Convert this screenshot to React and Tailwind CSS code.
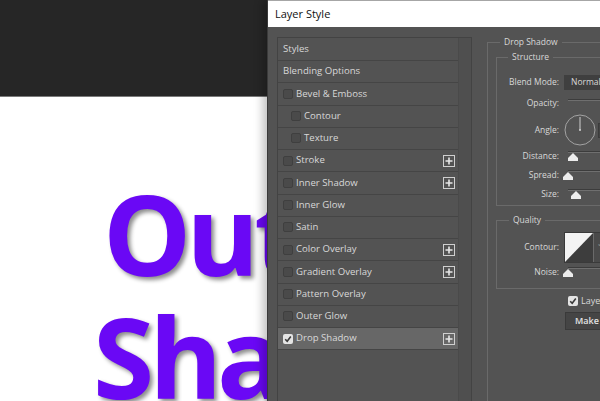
import React from "react";

const UI = { fontFamily: '"Open Sans", "Noto Sans", sans-serif' };

const effects = [
  { label: "Bevel & Emboss" },
  { label: "Contour", indent: true },
  { label: "Texture", indent: true },
  { label: "Stroke", plus: true },
  { label: "Inner Shadow", plus: true },
  { label: "Inner Glow" },
  { label: "Satin" },
  { label: "Color Overlay", plus: true },
  { label: "Gradient Overlay", plus: true },
  { label: "Pattern Overlay" },
  { label: "Outer Glow" },
  { label: "Drop Shadow", plus: true, checked: true, active: true },
];

function CheckBox({ checked }) {
  if (checked) {
    return (
      <span className="flex h-[10px] w-[10px] shrink-0 items-center justify-center rounded-[2px] bg-[#e4e4e4]">
        <svg width="8" height="8" viewBox="0 0 8 8">
          <path d="M1.2 4.2 L3.2 6.2 L6.8 1.6" fill="none" stroke="#3a3a3a" strokeWidth="1.6" />
        </svg>
      </span>
    );
  }
  return <span className="h-[10px] w-[10px] shrink-0 rounded-[2px] border border-[#3f3f3f] bg-[#4a4a4a]" />;
}

function PlusBox() {
  return (
    <span className="flex h-[12px] w-[12px] items-center justify-center border border-[#cfcfcf]">
      <svg width="8" height="8" viewBox="0 0 8 8">
        <path d="M4 0.5 V7.5 M0.5 4 H7.5" stroke="#e6e6e6" strokeWidth="1.6" />
      </svg>
    </span>
  );
}

function Thumb() {
  return (
    <svg width="10" height="8" viewBox="0 0 10 8">
      <polygon points="5,0 10,5 10,8 0,8 0,5" fill="#ececec" />
    </svg>
  );
}

function Track() {
  return <div className="h-[2px] w-full border-t border-[#3c3c3c] bg-[#6f6f6f]" />;
}

function SliderRow({ label, thumb }) {
  return (
    <div className="flex h-[19px] items-center">
      <div className="w-[63px] pr-[1px] text-right">{label}</div>
      <div className="ml-[8px] flex flex-1 flex-col self-start pt-[4px]">
        <Track />
        <div className={thumb}>
          <Thumb />
        </div>
      </div>
    </div>
  );
}

export default function App() {
  return (
    <div className="relative h-[401px] w-[600px] overflow-hidden bg-white" style={UI}>
      {/* document canvas */}
      <div className="flex h-full flex-col">
        <div className="h-[97px] shrink-0 border-b border-[#7a7a7a] bg-[#262626]" />
        <div
          className="min-h-0 flex-1 overflow-hidden whitespace-nowrap font-bold leading-none tracking-[-5px] text-[#6a08f5] [text-shadow:3px_3px_4px_rgba(0,0,0,0.45)]"
          style={{ fontFamily: '"Open Sans", sans-serif' }}
        >
          <div className="mt-[81px] ml-[103px] text-[111px]">Outer</div>
          <div className="mt-[12px] ml-[93px] text-[111px]">Shadow</div>
        </div>
      </div>

      {/* Layer Style dialog */}
      <div className="absolute left-[267px] top-0 flex h-[401px] w-[340px] flex-col border-l border-[#3a3a3a] shadow-[-5px_0_8px_rgba(0,0,0,0.22)]">
        <div className="flex h-[27px] shrink-0 items-center border-t border-[#a6a6a6] bg-white pl-[7px] text-[11px] text-[#111]">
          Layer Style
        </div>
        <div className="flex min-h-0 flex-1 overflow-hidden bg-[#535353] pl-[9px] text-[9.6px] text-[#d8d8d8]">
          {/* effects list */}
          <div className="mt-[10px] flex h-[400px] w-[195px] shrink-0 border-l border-t border-r border-[#434343]">
            <div className="flex w-[180px] flex-col">
              <div className="flex h-[23px] shrink-0 items-center border-b border-[#454545] pl-[5px]">Styles</div>
              <div className="flex h-[22.25px] shrink-0 items-center border-b border-[#454545] pl-[5px]">Blending Options</div>
              {effects.map((e) => (
                <div
                  key={e.label}
                  className={
                    "flex h-[22.25px] shrink-0 items-center border-b border-[#454545] pr-[3px] " +
                    (e.indent ? "pl-[13px] " : "pl-[5px] ") +
                    (e.active ? "bg-[#676767]" : "")
                  }
                >
                  <CheckBox checked={e.checked} />
                  <span className="ml-[3px] flex-1 whitespace-nowrap">{e.label}</span>
                  {e.plus && <PlusBox />}
                </div>
              ))}
            </div>
            <div className="flex-1 border-l border-[#4a4a4a] bg-[#4f4f4f]" />
          </div>

          {/* settings */}
          <div className="ml-[15px] mt-[8px] shrink-0 text-[8.5px]">
            <fieldset className="h-[400px] w-[200px] border border-[#6a6a6a]">
              <legend className="ml-[12px] px-[4px] leading-[14px]">Drop Shadow</legend>
              <fieldset className="ml-[8px] mt-[1px] border border-[#6a6a6a] pb-[1px]">
                <legend className="ml-[11px] px-[4px] leading-[14px]">Structure</legend>
                <div className="mt-[11px] flex h-[15px] items-center">
                  <div className="w-[63px] pr-[1px] text-right">Blend Mode:</div>
                  <div className="ml-[4px] flex h-[15px] flex-1 items-center bg-[#3f3f3f] pl-[7px]">Normal</div>
                </div>
                <div className="mt-[5px] flex h-[16px] items-center">
                  <div className="w-[63px] pr-[1px] text-right">Opacity:</div>
                  <div className="ml-[8px] flex-1 self-start pt-[4px]">
                    <Track />
                  </div>
                </div>
                <div className="mt-[3px] flex h-[32px] items-center">
                  <div className="w-[63px] pr-[1px] text-right">Angle:</div>
                  <svg className="ml-[4px]" width="32" height="32" viewBox="0 0 32 32">
                    <circle cx="16" cy="16" r="15" fill="none" stroke="#a3a3a3" strokeWidth="1" />
                    <path d="M16 16 V3" stroke="#cfcfcf" strokeWidth="1" />
                    <circle cx="16" cy="16" r="1" fill="#cfcfcf" />
                  </svg>
                  <div className="ml-[2px] h-[15px] w-[20px] border border-[#3c3c3c] bg-[#454545]" />
                </div>
                <div className="mt-[1px]">
                  <SliderRow label="Distance:" thumb="ml-[0px]" />
                  <SliderRow label="Spread:" thumb="ml-[-5px]" />
                  <SliderRow label="Size:" thumb="ml-[3px]" />
                </div>
              </fieldset>

              <fieldset className="ml-[8px] mt-[7px] border border-[#6a6a6a] pb-[6px]">
                <legend className="ml-[12px] px-[4px] leading-[14px]">Quality</legend>
                <div className="mt-[5px] flex h-[31px] items-center">
                  <div className="w-[63px] pr-[1px] text-right">Contour:</div>
                  <div className="ml-[4px] flex h-[31px] border border-[#3a3a3a]">
                    <svg width="28" height="29" viewBox="0 0 28 29">
                      <rect width="28" height="29" fill="#3d3d3d" />
                      <polygon points="0,0 28,0 0,29" fill="#f4f4f4" />
                    </svg>
                    <div className="flex w-[12px] items-center justify-center border-l border-[#6a6a6a] bg-[#4a4a4a] text-[8px] text-[#bdbdbd]">
                      ˅
                    </div>
                  </div>
                </div>
                <SliderRow label="Noise:" thumb="ml-[-5px]" />
              </fieldset>

              <div className="ml-[80px] mt-[5px] flex items-center">
                <CheckBox checked />
                <span className="ml-[3px] whitespace-nowrap text-[9px]">Layer Knocks Out Drop Shadow</span>
              </div>
              <div className="ml-[77px] mt-[4px] flex h-[18px] w-[90px] items-center border border-[#3a3a3a] bg-[#454545] pl-[9px] text-[9px] font-semibold text-[#e2e2e2]">
                Make Default
              </div>
            </fieldset>
          </div>
        </div>
      </div>
    </div>
  );
}
